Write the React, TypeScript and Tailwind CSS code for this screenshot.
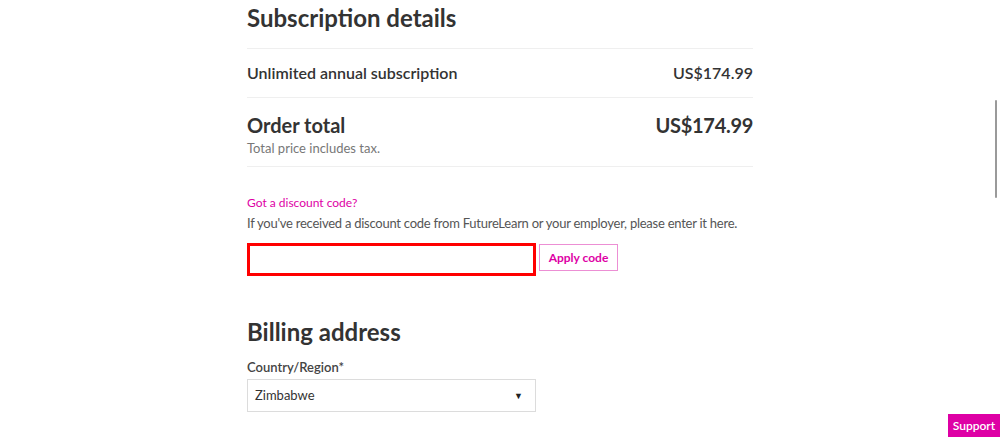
import { useState } from 'react';

export default function App() {
  const [code, setCode] = useState('');

  return (
    <div className="relative min-h-[438px] w-full bg-white font-['Lato','Open_Sans',sans-serif] text-[#333]">
      <div className="mx-auto w-[506px] pt-[2px]">
        <h1 className="text-[24px] font-bold leading-[32px] text-[#333]">
          Subscription details
        </h1>

        <div className="mt-[14px] border-t border-[#efefef]" />
        <div className="flex h-[48px] items-center justify-between text-[16px] font-semibold text-[#333]">
          <span>Unlimited annual subscription</span>
          <span>US$174.99</span>
        </div>

        <div className="border-t border-[#efefef] pt-[13px] pb-[9px]">
          <div className="flex items-center justify-between text-[20px] font-bold leading-[28px] text-[#333]">
            <span>Order total</span>
            <span className="tracking-[-0.3px]">US$174.99</span>
          </div>
          <p className="text-[13px] leading-[18px] text-[#777]">
            Total price includes tax.
          </p>
        </div>
        <div className="border-t border-[#efefef]" />

        <p className="mt-[28px] text-[12px] leading-[16px] text-[#de00a5]">
          Got a discount code?
        </p>
        <p className="mt-[3px] whitespace-nowrap text-[13px] leading-[18px] tracking-[-0.25px] text-[#555]">
          If you've received a discount code from FutureLearn or your employer,
          please enter it here.
        </p>

        <div className="mt-[11px] flex items-start gap-[3px]">
          <input
            value={code}
            onChange={(e) => setCode(e.target.value)}
            className="h-[33px] w-[289px] border-[3px] border-[#ff0000] px-2 text-[13px] outline-none"
          />
          <button
            type="button"
            className="mt-px h-[27px] w-[79px] border border-[#ec8fd4] text-[12px] font-bold text-[#de00a5]"
          >
            Apply code
          </button>
        </div>

        <h2 className="mt-[40px] text-[24px] font-bold leading-[32px] text-[#333]">
          Billing address
        </h2>
        <p className="mt-[10px] text-[13px] font-semibold leading-[18px] text-[#444]">
          Country/Region*
        </p>
        <div className="mt-[3px] flex h-[33px] w-[289px] items-center justify-between border border-[#dcdcdc] pl-[7px] pr-[12px] text-[13px] text-[#333]">
          <span>Zimbabwe</span>
          <span className="text-[9px] text-[#222]">▼</span>
        </div>
      </div>

      {/* overlay scrollbar thumb */}
      <div className="absolute right-[3px] top-[100px] h-[98px] w-[2px] rounded bg-[#9a9a9a]" />

      <button
        type="button"
        className="fixed bottom-[1px] right-0 flex h-[23px] w-[52px] items-center justify-center bg-[#de00a5] text-[12px] font-semibold text-white"
      >
        Support
      </button>
    </div>
  );
}
